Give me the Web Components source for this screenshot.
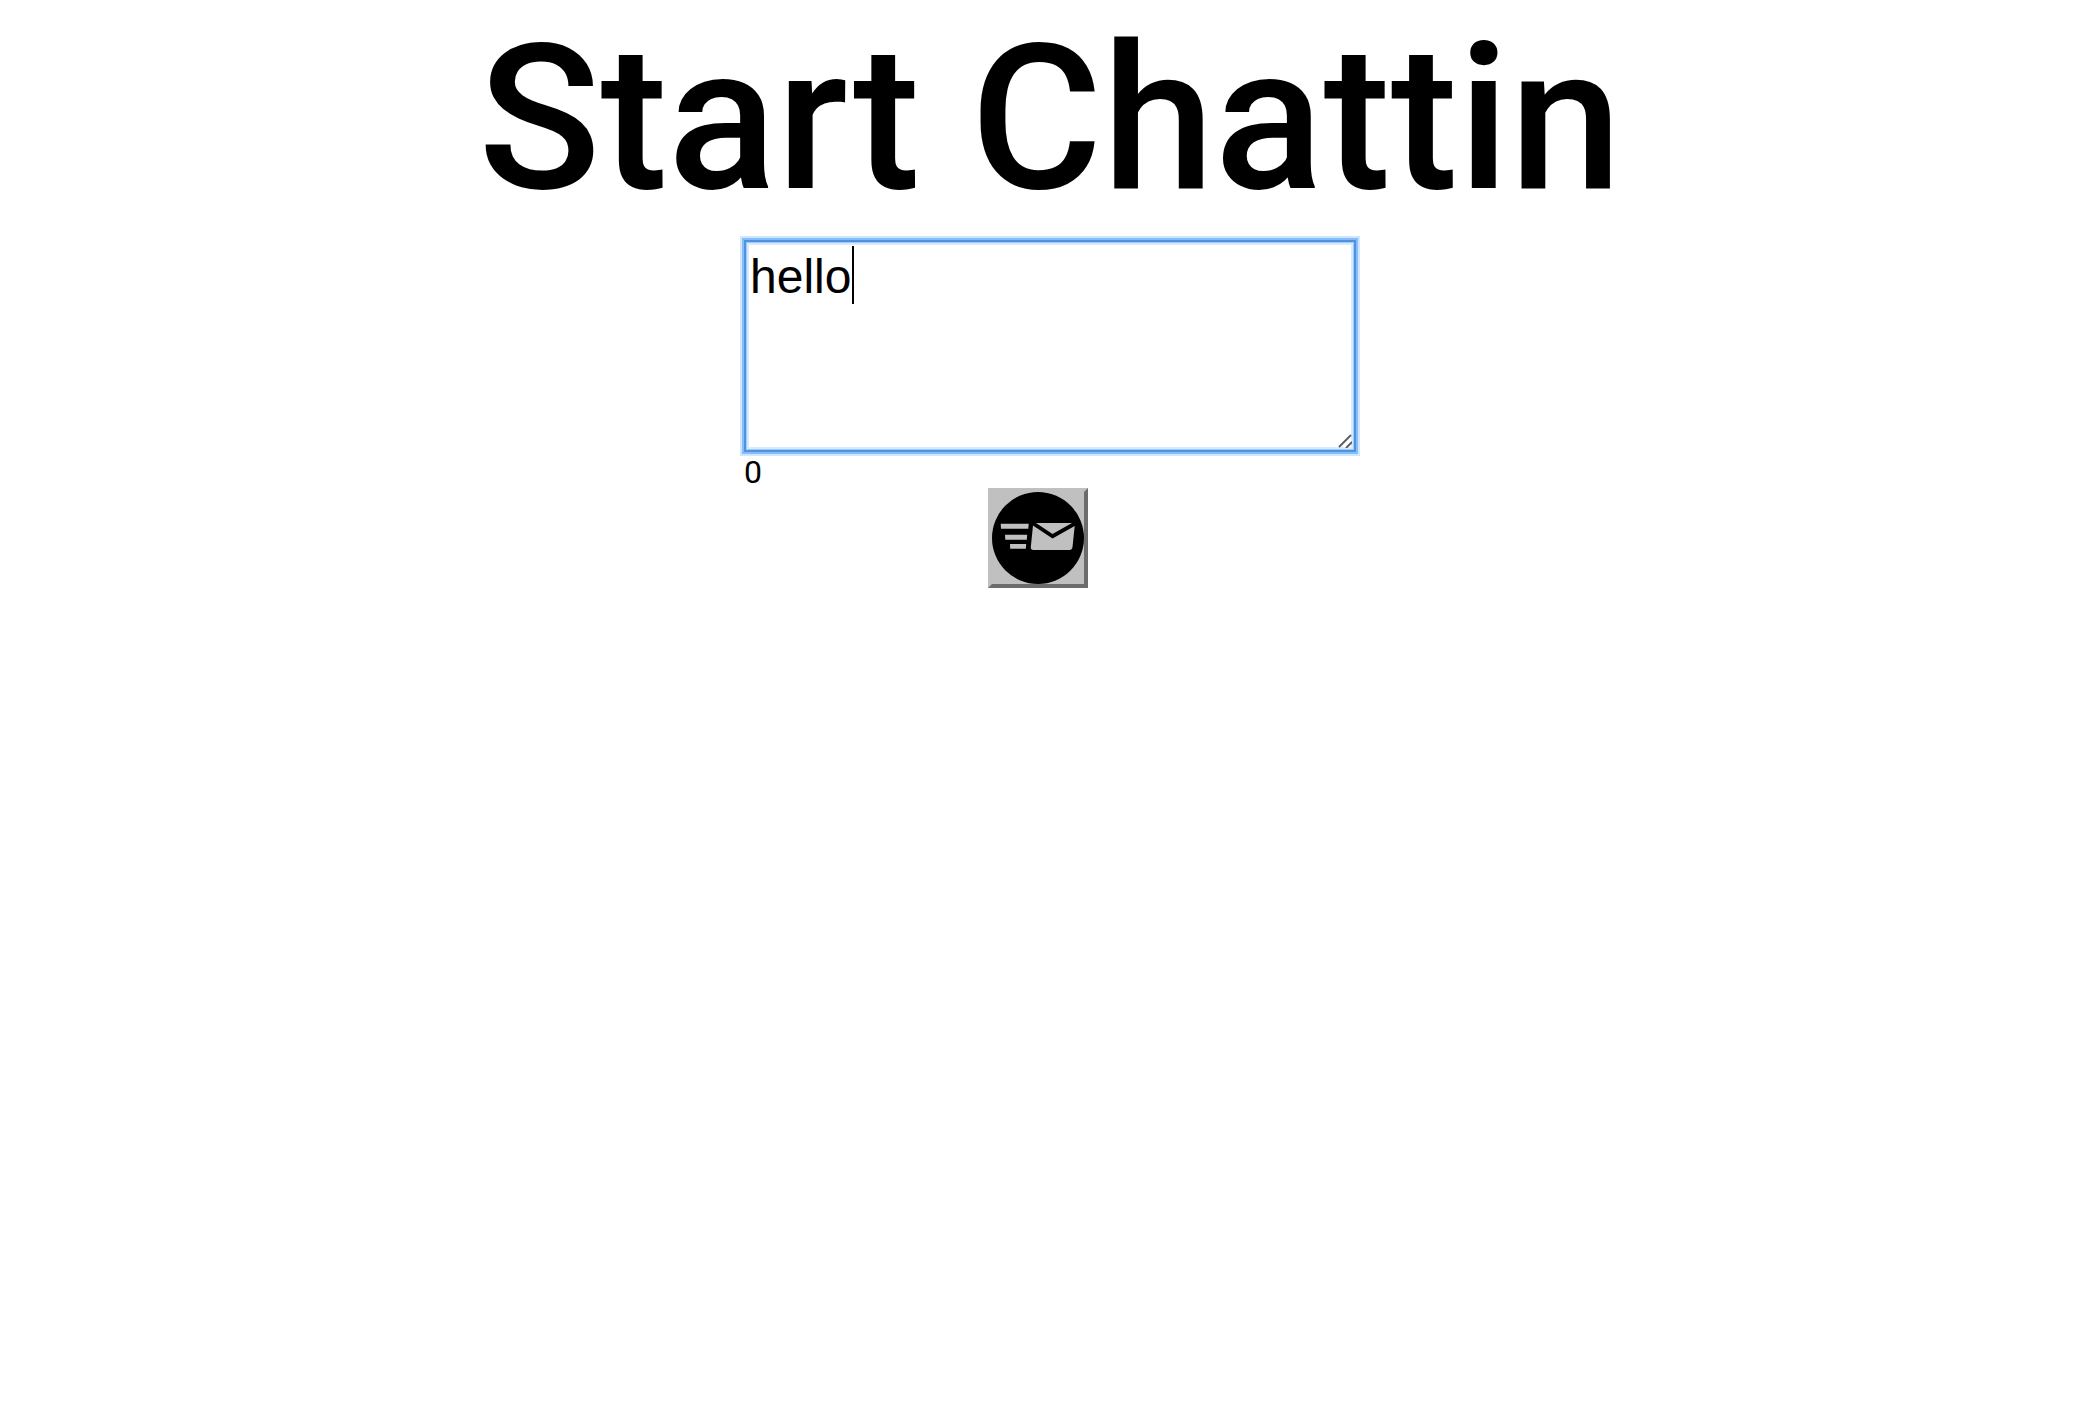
<!DOCTYPE html>
<html lang="en">
<head>
<meta charset="utf-8">
<meta name="viewport" content="width=device-width, initial-scale=1">
<title>Start Chattin</title>
<style>
  body { margin: 0; background: #fff; color: #000; font-family: Roboto, sans-serif; }
</style>
</head>
<body>
<chat-page>
  <chat-title slot="title">Start Chattin</chat-title>
  <message-box slot="composer" value="hello" count="0"></message-box>
  <send-button slot="action"></send-button>
</chat-page>
<script>
  class ChatPage extends HTMLElement {
    constructor() {
      super();
      this.attachShadow({ mode: 'open' }).innerHTML = `
        <style>
          :host { display: block; }
          main { display: flex; flex-direction: column; align-items: center; }
          form { display: flex; flex-direction: column; align-items: center; margin: 0; max-width: 100%; }
        </style>
        <main>
          <slot name="title"></slot>
          <form onsubmit="return false">
            <slot name="composer"></slot>
            <slot name="action"></slot>
          </form>
        </main>`;
    }
  }

  class ChatTitle extends HTMLElement {
    constructor() {
      super();
      this.attachShadow({ mode: 'open' }).innerHTML = `
        <style>
          :host { display: block; }
          h1 { margin: 0 0 2px; font-size: 202px; line-height: 238px; font-weight: 500; text-align: center; }
        </style>
        <h1><slot></slot></h1>`;
    }
  }

  class MessageBox extends HTMLElement {
    connectedCallback() {
      const root = this.attachShadow({ mode: 'open' });
      root.innerHTML = `
        <style>
          :host { display: block; width: 612px; max-width: 100%; }
          .field { position: relative; display: flex; }
          textarea {
            box-sizing: border-box; width: 100%; height: 212px; margin: 0; padding: 7px 4px;
            border: 2px solid #5192dd; border-radius: 0; outline: none; resize: none;
            background: #fff; color: #000; caret-color: transparent;
            font: 48px/56px "Liberation Sans", sans-serif;
            box-shadow: 0 0 0 2px #85bdfb, 0 0 0 4px #d0e6fe, inset 0 0 0 1px #9ccafc, inset 0 0 0 3px #d8eafe;
          }
          .caret { position: absolute; left: 108px; top: 6px; width: 2px; height: 58px; background: #000; }
          .grip { position: absolute; right: 4px; bottom: 4px; width: 14px; height: 14px; }
          output { display: block; padding-top: 4px; font-size: 32px; line-height: 32px; }
        </style>
        <div class="field">
          <textarea aria-label="Message"></textarea>
          <span class="caret"></span>
          <svg class="grip" viewBox="0 0 14 14" fill="none" stroke="#606060" stroke-width="2" aria-hidden="true">
            <path d="M1 13 13 1M8 14l6-6"/>
          </svg>
        </div>
        <output></output>`;
      root.querySelector('textarea').value = this.getAttribute('value');
      root.querySelector('output').textContent = this.getAttribute('count');
    }
  }

  class SendButton extends HTMLElement {
    constructor() {
      super();
      this.attachShadow({ mode: 'open' }).innerHTML = `
        <style>
          :host { display: block; margin-right: 24px; }
          button {
            display: block; padding: 0; background: #c0c0c0; border: 4px solid;
            border-color: #c0c0c0 #6c6c6c #6c6c6c #c0c0c0; border-radius: 0;
          }
          svg { display: block; width: 92px; height: 92px; }
        </style>
        <button type="submit" aria-label="Send">
          <svg viewBox="0 0 92 92" fill="#c0c0c0" aria-hidden="true">
            <circle cx="46" cy="46" r="46" fill="#000"/>
            <path d="M8.700 31.700H36.700L36.300 36.700H9ZM13 42.700H35.200L34.800 47.700H13.300ZM18 52H34.200L33.800 56.700H18.200Z"/>
            <path d="M44 31H80L60.500 42Z"/>
            <path d="M41 33.500 60.500 46.500 82.700 34 80.500 55Q80 58 77.500 58H41.500Q38.500 58 38.800 55Z"/>
          </svg>
        </button>`;
    }
  }

  customElements.define('chat-page', ChatPage);
  customElements.define('chat-title', ChatTitle);
  customElements.define('message-box', MessageBox);
  customElements.define('send-button', SendButton);
</script>
</body>
</html>
